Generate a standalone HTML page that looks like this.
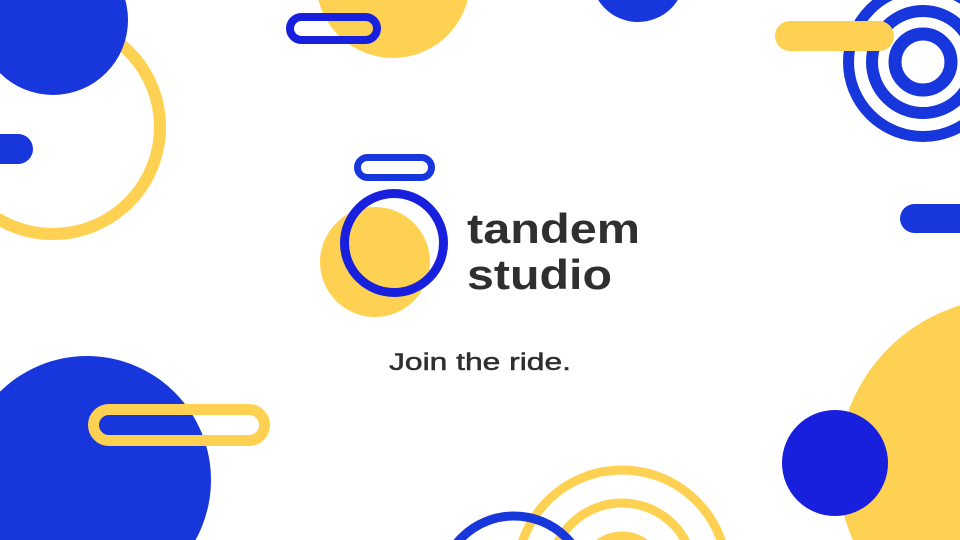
<!DOCTYPE html>
<html><head><meta charset="utf-8"><style>
html,body{margin:0;padding:0;background:#fff;width:960px;height:540px;overflow:hidden}
svg{position:absolute;left:0;top:0;display:block;overflow:hidden}
.t{font-family:"Liberation Sans",sans-serif;fill:#2f2f2f;font-weight:bold}
.j{font-family:"Liberation Sans",sans-serif;fill:#2f2f2f;stroke:#2f2f2f;stroke-width:0.5}
</style></head><body>
<svg width="960" height="540" viewBox="0 0 960 540">
<circle cx="53" cy="127" r="107" fill="none" stroke="#FFD152" stroke-width="12"/>
<circle cx="53" cy="20" r="75" fill="#1736DB"/>
<rect x="-20" y="134" width="53" height="30" rx="15" fill="#1736DB"/>
<circle cx="393" cy="-19" r="77" fill="#FFD152"/>
<rect x="290" y="17" width="87" height="23" rx="11.5" fill="none" stroke="#1820DE" stroke-width="8"/>
<circle cx="638" cy="-25" r="47" fill="#1736DB"/>
<circle cx="923" cy="62" r="74.5" fill="none" stroke="#1736DB" stroke-width="11"/>
<circle cx="923" cy="62" r="51" fill="none" stroke="#1736DB" stroke-width="12"/>
<circle cx="923" cy="62" r="28" fill="none" stroke="#1736DB" stroke-width="13"/>
<rect x="775" y="21" width="119" height="30" rx="15" fill="#FFD152"/>
<rect x="900" y="204" width="90" height="29" rx="14.5" fill="#1736DB"/>
<circle cx="375" cy="262" r="55" fill="#FFD152"/>
<circle cx="394" cy="243" r="49.5" fill="none" stroke="#1820DE" stroke-width="9"/>
<rect x="357.5" y="157.5" width="74" height="20" rx="10" fill="none" stroke="#1736DB" stroke-width="7"/>
<text class="t" x="467" y="243" font-size="42" textLength="173" lengthAdjust="spacingAndGlyphs">tandem</text>
<text class="t" x="467" y="289" font-size="42" textLength="145" lengthAdjust="spacingAndGlyphs">studio</text>
<text class="j" x="389" y="370" font-size="24" textLength="182" lengthAdjust="spacingAndGlyphs">Join the ride.</text>
<circle cx="87" cy="480" r="124" fill="#1736DB"/>
<rect x="93.5" y="409.5" width="171" height="31" rx="15.5" fill="none" stroke="#FFD152" stroke-width="11"/>
<circle cx="622" cy="575" r="105" fill="none" stroke="#FFD152" stroke-width="9"/>
<circle cx="622" cy="575" r="72" fill="none" stroke="#FFD152" stroke-width="9"/>
<circle cx="622" cy="575" r="39" fill="none" stroke="#FFD152" stroke-width="9"/>
<circle cx="514" cy="590" r="74" fill="none" stroke="#1736DB" stroke-width="9"/>
<circle cx="1010" cy="470" r="172" fill="#FFD152"/>
<circle cx="835" cy="463" r="53" fill="#1820DE"/>
</svg>
</body></html>
